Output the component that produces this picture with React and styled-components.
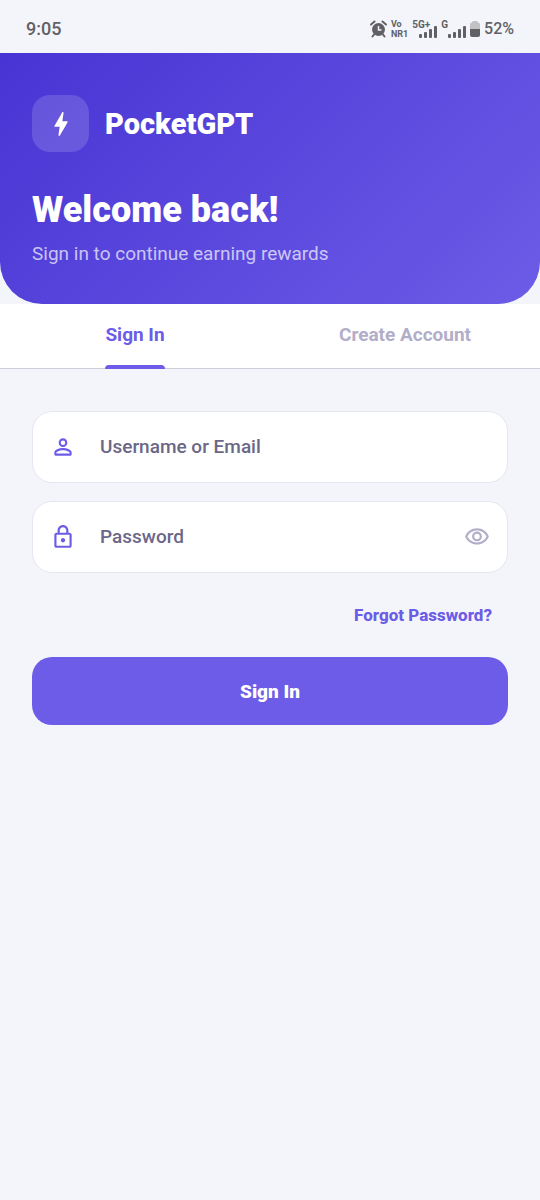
import React, { useState } from "react";
import styled, { createGlobalStyle, css } from "styled-components";

const color = {
  page: "#f4f5fb",
  primary: "#6c5ce7",
  deep: "#4834d4",
  muted: "#b2aec9",
  hint: "#6b6787",
  status: "#616165",
};

const GlobalStyle = createGlobalStyle`
  *, *::before, *::after { box-sizing: border-box; }
  body {
    margin: 0;
    background: ${color.page};
    font-family: Roboto, "Liberation Sans", sans-serif;
  }
  button, input { font-family: inherit; }
`;

const Screen = styled.div`
  min-height: 100vh;
  background: ${color.page};
`;

const StatusBar = styled.div`
  display: flex;
  align-items: center;
  justify-content: space-between;
  height: 53px;
  padding: 4px 26px 0;
  color: ${color.status};
`;

const Clock = styled.span`
  font-size: 18px;
  font-weight: 500;
`;

const StatusItems = styled.div`
  display: flex;
  align-items: center;
  gap: 4px;
`;

const Network = styled.span`
  display: flex;
  flex-direction: column;
  font-size: 9px;
  line-height: 10px;
  font-weight: 700;
`;

const Signal = styled.span`
  display: flex;
  align-items: flex-start;
  height: 18px;
  font-size: 10px;
  line-height: 10px;
  font-weight: 700;

  svg {
    align-self: flex-end;
    margin-left: ${(p) => (p.$overlap ? "-11px" : "0")};
  }
`;

const Percent = styled.span`
  font-size: 16px;
  font-weight: 500;
`;

const Header = styled.header`
  padding: 42px 32px 36px;
  border-radius: 0 0 42px 42px;
  background: linear-gradient(135deg, ${color.deep}, ${color.primary});
  color: #fff;
`;

const Brand = styled.div`
  display: flex;
  align-items: center;
  gap: 16px;
`;

const Logo = styled.span`
  display: grid;
  place-items: center;
  width: 57px;
  height: 57px;
  border-radius: 18px;
  background: rgba(255, 255, 255, 0.15);
`;

const BrandName = styled.span`
  font-size: 29px;
  line-height: 36px;
  font-weight: 900;
`;

const Title = styled.h1`
  margin: 36px 0 8px;
  font-size: 36px;
  line-height: 44px;
  font-weight: 900;
`;

const Subtitle = styled.p`
  margin: 0;
  font-size: 19px;
  line-height: 28px;
  color: rgba(255, 255, 255, 0.7);
`;

const Tabs = styled.div`
  display: flex;
  background: #fff;
  border-bottom: 1px solid #cfcdda;
`;

const Tab = styled.button`
  flex: 1;
  display: flex;
  justify-content: center;
  height: 64px;
  padding: 0;
  border: 0;
  background: none;
  color: ${(p) => (p.$active ? color.primary : color.muted)};
  font-size: 19px;
  font-weight: 700;
  cursor: pointer;
`;

const TabLabel = styled.span`
  display: flex;
  align-items: center;
  height: 65px;
  border-bottom: 4px solid transparent;
  position: relative;

  ${(p) =>
    p.$active &&
    css`
      &::after {
        content: "";
        position: absolute;
        inset: auto 0 -4px;
        height: 4px;
        border-radius: 4px 4px 0 0;
        background: ${color.primary};
      }
    `}
`;

const Form = styled.form`
  display: flex;
  flex-direction: column;
  gap: 18px;
  padding: 42px 32px;
`;

const Field = styled.label`
  display: flex;
  align-items: center;
  height: 72px;
  padding: 0 17px;
  border: 1px solid #e6e5f2;
  border-radius: 20px;
  background: #fff;
  color: ${color.primary};
`;

const TextInput = styled.input`
  flex: 1;
  min-width: 0;
  margin-left: 24px;
  padding: 0;
  border: 0;
  outline: 0;
  background: transparent;
  font-size: 19px;
  line-height: 28px;
  font-weight: 500;
  color: #2d2a45;

  &::placeholder {
    color: ${color.hint};
    opacity: 1;
  }
`;

const EyeButton = styled.button`
  display: flex;
  padding: 0;
  border: 0;
  background: none;
  color: ${color.muted};
  cursor: pointer;
`;

const ForgotLink = styled.a`
  align-self: flex-end;
  margin: 12px 16px;
  font-size: 17px;
  line-height: 24px;
  font-weight: 800;
  color: ${color.primary};
  text-decoration: none;
`;

const Submit = styled.button`
  height: 68px;
  border: 0;
  border-radius: 20px;
  background: ${color.primary};
  color: #fff;
  font-size: 19px;
  font-weight: 900;
  cursor: pointer;
`;

const Icon = ({ size = 26, children }) => (
  <svg width={size} height={size} viewBox="0 0 24 24" fill="currentColor" aria-hidden="true">
    {children}
  </svg>
);

const BoltIcon = () => (
  <Icon size={32}>
    <path d="M10.67 21c-.35 0-.62-.31-.57-.66L11 14H7.5c-.88 0-.33-.75-.31-.78 1.26-2.23 3.15-5.53 5.65-9.93.1-.18.3-.29.5-.29.35 0 .62.31.57.66l-.9 6.34h3.51c.4 0 .62.19.4.66-3.29 5.74-5.2 9.09-5.75 10.05-.1.18-.29.29-.5.29z" />
  </Icon>
);

const PersonIcon = () => (
  <Icon>
    <path d="M12 5.9a2.1 2.1 0 1 1 0 4.2 2.1 2.1 0 0 1 0-4.2m0 9c2.97 0 6.1 1.46 6.1 2.1v1.1H5.9V17c0-.64 3.13-2.1 6.1-2.1M12 4a4 4 0 1 0 0 8 4 4 0 0 0 0-8m0 9c-2.67 0-8 1.34-8 4v2a1 1 0 0 0 1 1h14a1 1 0 0 0 1-1v-2c0-2.66-5.33-4-8-4" />
  </Icon>
);

const LockIcon = () => (
  <Icon>
    <path d="M18 8h-1V6c0-2.76-2.24-5-5-5S7 3.24 7 6v2H6c-1.1 0-2 .9-2 2v10c0 1.1.9 2 2 2h12c1.1 0 2-.9 2-2V10c0-1.1-.9-2-2-2M9 6c0-1.66 1.34-3 3-3s3 1.34 3 3v2H9zm9 14H6V10h12zm-6-3c1.1 0 2-.9 2-2s-.9-2-2-2-2 .9-2 2 .9 2 2 2" />
  </Icon>
);

const EyeIcon = () => (
  <Icon>
    <path d="M12 6c3.79 0 7.17 2.13 8.82 5.5C19.17 14.87 15.79 17 12 17s-7.17-2.13-8.82-5.5C4.83 8.13 8.21 6 12 6m0-2C7 4 2.73 7.11 1 11.5 2.73 15.89 7 19 12 19s9.27-3.11 11-7.5C21.27 7.11 17 4 12 4m0 5a2.5 2.5 0 1 1 0 5 2.5 2.5 0 0 1 0-5m0-2c-2.48 0-4.5 2.02-4.5 4.5S9.52 16 12 16s4.5-2.02 4.5-4.5S14.48 7 12 7" />
  </Icon>
);

const AlarmIcon = () => (
  <svg width="17" height="18" viewBox="0 0 17 18" aria-hidden="true">
    <circle cx="8.5" cy="9.5" r="6.5" fill="currentColor" />
    <path d="M4 14.5 2.5 16.5M13 14.5l1.5 2M1 4.5 4.5 1.5M16 4.5l-3.500-3" stroke="currentColor" strokeWidth="2" strokeLinecap="round" />
    <path d="M8.500 6v4h3" fill="none" stroke={color.page} strokeWidth="1.500" />
  </svg>
);

const BarsIcon = () => (
  <svg width="18" height="12" viewBox="0 0 18 12" fill="currentColor" aria-hidden="true">
    <rect x="0" y="8" width="3" height="4" rx="1" />
    <rect x="5" y="6" width="3" height="6" rx="1" />
    <rect x="10" y="3" width="3" height="9" rx="1" />
    <rect x="15" y="0" width="3" height="12" rx="1" />
  </svg>
);

const BatteryIcon = () => (
  <svg width="10" height="16" viewBox="0 0 10 16" aria-hidden="true">
    <path d="M2 1.500Q2 0 3.500 0h3Q8 0 8 1.500 10 1.500 10 3.500V8H0V3.500Q0 1.500 2 1.500" fill="#c2c2c5" />
    <path d="M0 8h10v6q0 2-2 2H2q-2 0-2-2z" fill="currentColor" />
  </svg>
);

export default function App() {
  const [tab, setTab] = useState("Sign In");
  const [visible, setVisible] = useState(false);

  return (
    <Screen>
      <GlobalStyle />
      <StatusBar>
        <Clock>9:05</Clock>
        <StatusItems>
          <AlarmIcon />
          <Network>
            <span>Vo</span>
            <span>NR1</span>
          </Network>
          <Signal $overlap>
            5G+
            <BarsIcon />
          </Signal>
          <Signal>
            G
            <BarsIcon />
          </Signal>
          <BatteryIcon />
          <Percent>52%</Percent>
        </StatusItems>
      </StatusBar>

      <Header>
        <Brand>
          <Logo>
            <BoltIcon />
          </Logo>
          <BrandName>PocketGPT</BrandName>
        </Brand>
        <Title>Welcome back!</Title>
        <Subtitle>Sign in to continue earning rewards</Subtitle>
      </Header>

      <Tabs role="tablist">
        {["Sign In", "Create Account"].map((name) => (
          <Tab
            key={name}
            type="button"
            role="tab"
            aria-selected={tab === name}
            $active={tab === name}
            onClick={() => setTab(name)}
          >
            <TabLabel $active={tab === name}>{name}</TabLabel>
          </Tab>
        ))}
      </Tabs>

      <Form onSubmit={(e) => e.preventDefault()}>
        <Field>
          <PersonIcon />
          <TextInput
            type="text"
            name="username"
            aria-label="Username or Email"
            placeholder="Username or Email"
          />
        </Field>
        <Field>
          <LockIcon />
          <TextInput
            type={visible ? "text" : "password"}
            name="password"
            aria-label="Password"
            placeholder="Password"
          />
          <EyeButton
            type="button"
            aria-label={visible ? "Hide password" : "Show password"}
            onClick={() => setVisible(!visible)}
          >
            <EyeIcon />
          </EyeButton>
        </Field>
        <ForgotLink href="#forgot">Forgot Password?</ForgotLink>
        <Submit type="submit">Sign In</Submit>
      </Form>
    </Screen>
  );
}
